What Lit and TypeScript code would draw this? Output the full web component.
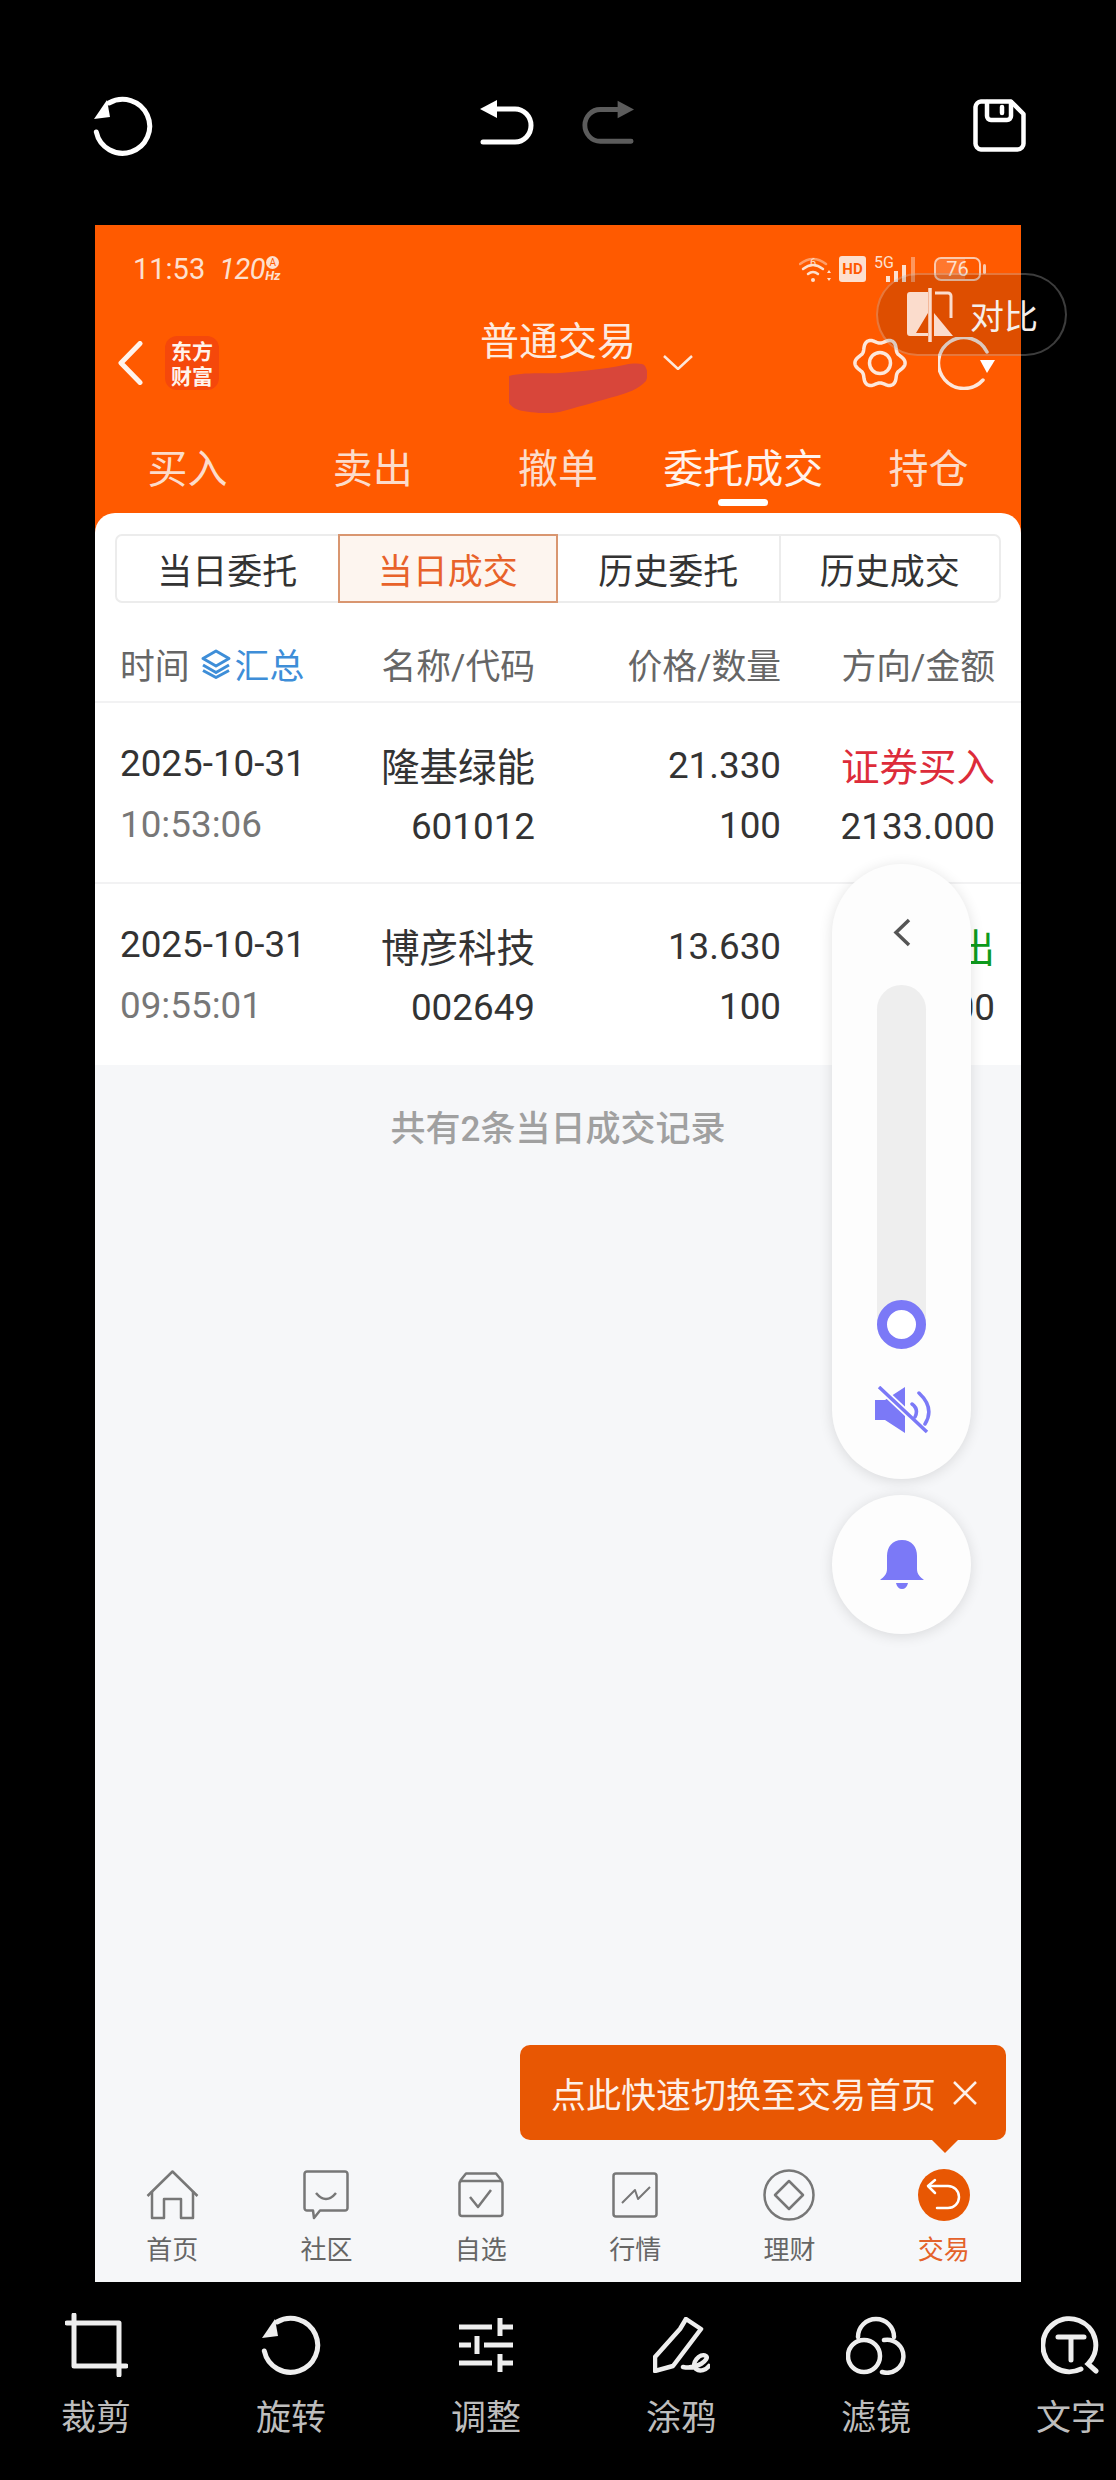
import { LitElement, html, css } from "lit";
import { customElement } from "lit/decorators.js";

const gearPath = (() => {
  const pts: string[] = [];
  for (let i = 0; i <= 120; i++) {
    const t = (i / 120) * Math.PI * 2;
    const r = 22.5 + 2.6 * Math.cos(6 * t);
    pts.push(`${(27 + r * Math.cos(t)).toFixed(2)} ${(26 + r * Math.sin(t)).toFixed(2)}`);
  }
  return "M" + pts.join("L") + "Z";
})();

const rows = [
  { d: "2025-10-31", t: "10:53:06", n: "隆基绿能", c: "601012", p: "21.330", q: "100", dir: "证券买入", cls: "buy", amt: "2133.000" },
  { d: "2025-10-31", t: "09:55:01", n: "博彦科技", c: "002649", p: "13.630", q: "100", dir: "证券卖出", cls: "sell", amt: "1363.000" },
];

@customElement("app-root")
export class AppRoot extends LitElement {
  static styles = css`
    :host {
      display: block;
      position: relative;
      width: 1116px;
      height: 2480px;
      background: #000;
      font-family: Roboto, "Noto Sans CJK SC", sans-serif;
    }
    svg { display: block; flex: none; }
    .top {
      height: 225px;
      box-sizing: border-box;
      padding: 0 90px 0 93px;
      display: flex;
      align-items: flex-start;
      justify-content: space-between;
    }
    .top-l { margin-top: 96px; }
    .top-c { margin: 99px 12px 0 0; display: flex; gap: 46px; }
    .top-r { margin-top: 99px; }
    .screen {
      position: relative;
      margin: 0 95px;
      height: 2057px;
      background: #f6f7f9;
      display: flex;
      flex-direction: column;
    }
    .hdr { background: #ff5a00; color: #fde7db; padding-bottom: 20px; }
    .status {
      height: 86px;
      box-sizing: border-box;
      padding: 2px 35px 0 38px;
      display: flex;
      align-items: center;
      justify-content: space-between;
    }
    .st-l { display: flex; align-items: center; font-size: 29px; color: #fde0cf; }
    .hz { font-style: italic; margin-left: 14px; letter-spacing: -0.5px; }
    .hzs { display: flex; flex-direction: column; align-items: center; }
    .hz-a { width: 13px; height: 13px; border-radius: 50%; background: #fde0cf; color: #ff5a00; font-size: 10px; line-height: 13px; text-align: center; }
    .hz-t { font-size: 13px; line-height: 13px; font-style: italic; font-weight: 700; }
    .st-r { display: flex; align-items: center; }
    .hd { width: 27px; height: 26px; border-radius: 3px; background: #fde0cf; color: #ff5a00; font-size: 15px; font-weight: 700; line-height: 26px; text-align: center; margin-left: 7px; }
    .sig { margin-left: 8px; }
    .batt { margin-left: 8px; display: flex; align-items: center; gap: 2px; }
    .batt-b { width: 47px; height: 24px; box-sizing: border-box; border: 2px solid #fcc9ad; border-radius: 7px; font-size: 20px; line-height: 20px; text-align: center; color: #fde0cf; background: linear-gradient(90deg, rgba(255,255,255,.18) 68%, transparent 68%); }
    .nub { width: 3px; height: 10px; background: #fcc9ad; border-radius: 2px; }
    .bar {
      height: 104px;
      display: grid;
      grid-template-columns: 1fr auto 1fr;
      align-items: center;
    }
    .bar-l { display: flex; align-items: center; padding-left: 23px; gap: 22px; }
    .logo {
      width: 54px; height: 54px; border-radius: 12px; background: #f5480b; color: #fff3ec;
      font-family: "Noto Sans CJK SC", sans-serif; font-weight: 700; font-size: 21px; line-height: 25px; text-align: center;
      display: flex; align-items: center; justify-content: center; white-space: pre-line;
    }
    .title-w { position: relative; align-self: flex-start; padding-top: 9px; display: flex; }
    .title { font-size: 39px; line-height: 44px; color: #fdeadf; }
    .caret { position: absolute; left: 183px; top: 44px; }
    .blob { position: absolute; left: 29px; top: 52px; }
    .bar-r { display: flex; justify-content: flex-end; align-items: center; padding-right: 26px; gap: 31px; }
    .tabs { display: grid; grid-template-columns: repeat(5, 1fr); padding-top: 33px; }
    .tab { display: flex; flex-direction: column; align-items: center; gap: 7px; font-size: 40px; line-height: 44px; color: #fcdccb; }
    .tab.on { color: #fff3ec; }
    .ul { width: 50px; height: 7px; border-radius: 4px; background: transparent; margin-bottom: 7px; }
    .tab.on .ul { background: #fff; }
    .card {
      background: #fff;
      border-radius: 20px 20px 0 0;
      margin-top: -20px;
      padding-top: 21px;
    }
    .seg {
      display: grid;
      grid-template-columns: repeat(4, 1fr);
      margin: 0 20px;
      height: 69px;
      box-sizing: border-box;
      border: 2px solid #ececec;
      border-radius: 7px;
      font-size: 35px;
      color: #333;
    }
    .seg div { display: flex; align-items: center; justify-content: center; border-left: 2px solid #ececec; }
    .seg div:first-child { border-left: 0; }
    .seg div.on { margin: -2px 0; color: #e8622a; background: #fdf5ef; border: 2px solid #d99670; }
    .seg div.on + div { border-left: 0; }
    .head, .row {
      display: grid;
      grid-template-columns: 241px 174px 246px 214px;
      padding: 0 26px 0 25px;
      border-bottom: 2px solid #f2f2f3;
    }
    .head {
      height: 100px;
      box-sizing: border-box;
      padding-top: 24px;
      align-items: center;
      font-size: 34.8px;
      color: #666;
    }
    .r { text-align: right; }
    .hc { display: flex; align-items: center; }
    .sum { margin-left: 10px; color: #3e8ed8; display: flex; align-items: center; gap: 3px; }
    .row { height: 181px; box-sizing: border-box; }
    .row:last-of-type { border-bottom: 0; }
    .cell { display: flex; flex-direction: column; line-height: 44px; font-size: 36.8px; color: #333; }
    .c1 { padding-top: 39px; gap: 17px; }
    .c1 .sub { color: #777; }
    .c2 { padding-top: 43px; gap: 15px; text-align: right; }
    .c3 { padding-top: 41px; gap: 16px; text-align: right; }
    .zh { font-size: 38.5px; }
    .buy { color: #dd2c3a; }
    .sell { color: #0d9a1c; }
    .foot {
      padding-top: 43px;
      text-align: center;
      font-size: 35px;
      line-height: 44px;
      font-weight: 500;
      color: #a0a0a0;
      flex: 1;
    }
    .main { flex: 1; display: flex; flex-direction: column; }
    .nav {
      display: grid;
      grid-template-columns: repeat(6, 1fr);
      padding: 12px 0 17px;
    }
    .ni { display: flex; flex-direction: column; align-items: center; gap: 14px; font-size: 26px; line-height: 30px; color: #666; }
    .ni .ic { height: 52px; display: flex; align-items: center; justify-content: center; }
    .ni.on { color: #e4622b; }
    .vol {
      position: absolute;
      left: 737px;
      top: 639px;
      width: 139px;
      display: flex;
      flex-direction: column;
      align-items: center;
      gap: 16px;
    }
    .pill {
      width: 139px;
      box-sizing: border-box;
      background: #fdfdfd;
      border-radius: 70px;
      box-shadow: 0 2px 14px rgba(0,0,0,.12);
      display: flex;
      flex-direction: column;
      align-items: center;
      padding: 54px 0 44px;
    }
    .track {
      margin: 38px 0 37px;
      width: 49px;
      height: 364px;
      background: #eeeeee;
      border-radius: 25px;
      display: flex;
      align-items: flex-end;
    }
    .knob { width: 49px; height: 49px; box-sizing: border-box; border-radius: 50%; border: 10px solid #7b79f7; background: #fff; }
    .mute { margin-left: 3px; }
    .bell {
      width: 139px; height: 139px; border-radius: 50%;
      background: #fdfdfd;
      box-shadow: 0 2px 14px rgba(0,0,0,.12);
      display: flex; align-items: center; justify-content: center;
    }
    .tip {
      position: absolute;
      left: 425px;
      top: 1820px;
      width: 486px;
      height: 95px;
      box-sizing: border-box;
      padding-left: 31px;
      background: #e85703;
      border-radius: 10px;
      color: #fdf0e8;
      font-size: 35px;
      display: flex;
      align-items: center;
      gap: 16px;
    }
    .tip-c {
      position: absolute;
      left: 412px;
      top: 95px;
      width: 0; height: 0;
      border-left: 13px solid transparent;
      border-right: 13px solid transparent;
      border-top: 13px solid #e85703;
    }
    .tools { display: flex; padding: 33px 0 0 51px; gap: 105px; }
    .tool { flex: none; width: 90px; display: flex; flex-direction: column; align-items: center; gap: 24px; font-size: 35px; line-height: 40px; color: #bdbdbd; }
    .tool .ic { height: 60px; display: flex; align-items: center; }
    .cmp {
      position: absolute;
      left: 876px;
      top: 273px;
      width: 191px;
      height: 83px;
      box-sizing: border-box;
      border: 2px solid rgba(255,255,255,.24);
      border-radius: 42px;
      background: rgba(0,0,0,.13);
      display: flex;
      align-items: center;
      padding-left: 29px;
      gap: 17px;
      color: #f5eeea;
      font-size: 34px;
    }
  `;

  render() {
    const wh = "#fff";
    const nv = "#777";
    return html`
      <div class="top">
        <div class="top-l">
          <svg width="60" height="60" viewBox="0 0 60 60" fill="none"><path d="M3.3 36A27 27 0 1 0 16 7" stroke="${wh}" stroke-width="5" stroke-linecap="round"/><path d="M14 4L1 23L17 21Z" fill="${wh}"/></svg>
        </div>
        <div class="top-c">
          <svg width="55" height="46" viewBox="0 0 55 46" fill="none"><path d="M3 43H35A16 16.5 0 0 0 35 10H12" stroke="${wh}" stroke-width="5" stroke-linecap="round"/><path d="M0 10L17 1V19Z" fill="${wh}"/></svg>
          <svg width="53" height="46" viewBox="0 0 55 46" fill="none"><path d="M52 43H20A16 16.5 0 0 1 20 10H43" stroke="#5c5c5c" stroke-width="5" stroke-linecap="round"/><path d="M55 10L38 1V19Z" fill="#5c5c5c"/></svg>
        </div>
        <div class="top-r">
          <svg width="53" height="53" viewBox="0 0 53 53" fill="none" stroke="${wh}" stroke-width="4.5" stroke-linejoin="round" stroke-linecap="round"><path d="M8 2.5H38L50.5 15V44A6 6 0 0 1 44.5 50.5H8A6 6 0 0 1 2.5 44V8A6 6 0 0 1 8 2.5Z"/><path d="M14 3V17A4 4 0 0 0 18 21H34A4 4 0 0 0 38 17V3"/><path d="M29 8V14"/></svg>
        </div>
      </div>

      <div class="screen">
        <div class="hdr">
          <div class="status">
            <div class="st-l"><span>11:53</span><span class="hz">120</span>
              <span class="hzs"><span class="hz-a">A</span><span class="hz-t">Hz</span></span></div>
            <div class="st-r">
              <svg width="33" height="28" viewBox="0 0 33 28" fill="none" stroke="#fde0cf" stroke-width="2.5" stroke-linecap="round"><path d="M1 9Q14 -1 27 9" opacity=".5"/><path d="M4 14Q14 6 24 14"/><path d="M9 19Q14 15 19 19"/><circle cx="14" cy="25" r="2" fill="#fde0cf" stroke="none"/><path d="M30 15L32 18H28Z M30 26L32 23H28Z" fill="#fde0cf" stroke="none"/><text x="14" y="11" font-size="11" fill="#fde0cf" stroke="none" text-anchor="middle" font-family="Roboto">6</text></svg>
              <div class="hd">HD</div>
              <svg class="sig" width="52" height="28" viewBox="0 0 52 28" fill="#fde0cf"><text x="0" y="13" font-size="16" font-family="Roboto">5G</text><rect x="12" y="21" width="4" height="6"/><rect x="20" y="16" width="4" height="11"/><rect x="28" y="10" width="4" height="17"/><rect x="37" y="2" width="4" height="25" opacity=".45"/></svg>
              <div class="batt"><div class="batt-b">76</div><div class="nub"></div></div>
            </div>
          </div>
          <div class="bar">
            <div class="bar-l">
              <svg width="25" height="44" viewBox="0 0 25 44" fill="none"><path d="M22 2.5L3 22L22 41.5" stroke="#fff3ec" stroke-width="5" stroke-linecap="round" stroke-linejoin="round"/></svg>
              <div class="logo">东方
财富</div>
            </div>
            <div class="title-w">
              <div class="title">普通交易</div>
              <svg class="caret" width="30" height="15" viewBox="0 0 30 15" fill="none"><path d="M1 1L15 14L29 1" stroke="#fde7db" stroke-width="2.5"/></svg>
              <svg class="blob" width="138" height="50" viewBox="0 0 138 50"><path d="M0 13C15 9 35 11 51 10C75 8 95 6 115 2C125 0 134 0 136 3C139 8 139 13 137 18C130 26 118 30 108 33C90 38 72 43 58 47C48 50 38 51 30 50C20 49 10 48 5 45C1 42 -1 40 0 37C-1 30 -1 20 0 13Z" fill="#d8463a"/></svg>
            </div>
            <div class="bar-r">
              <svg width="54" height="52" viewBox="0 0 54 52" fill="none" stroke="#fde7db" stroke-width="3.5"><path d="${gearPath}" stroke-linejoin="round"/><circle cx="27" cy="26" r="10.5"/></svg>
              <svg width="57" height="53" viewBox="0 0 57 53" fill="none"><path d="M49 15A25.5 25.5 0 1 0 45 43" stroke="#fde7db" stroke-width="3.5" stroke-linecap="round"/><path d="M42 23H57L49 36Z" fill="#fff"/></svg>
            </div>
          </div>
          <div class="tabs">
            ${["买入", "卖出", "撤单", "委托成交", "持仓"].map(
              (t, i) => html`<div class="tab ${i === 3 ? "on" : ""}"><span>${t}</span><div class="ul"></div></div>`
            )}
          </div>
        </div>

        <div class="card">
          <div class="seg">
            <div>当日委托</div><div class="on">当日成交</div><div>历史委托</div><div>历史成交</div>
          </div>
          <div class="head">
            <div class="hc">时间<span class="sum">
              <svg width="32" height="30" viewBox="0 0 32 30" fill="none" stroke="#3e8ed8" stroke-width="3" stroke-linejoin="round"><path d="M16 2L29 9.5L16 17L3 9.5Z"/><path d="M3 16L16 23.5L29 16"/><path d="M3 21.5L16 28.5L29 21.5"/></svg>汇总</span></div>
            <div class="r">名称/代码</div>
            <div class="r">价格/数量</div>
            <div class="r">方向/金额</div>
          </div>
          ${rows.map(
            (r) => html`<div class="row">
              <div class="cell c1"><span>${r.d}</span><span class="sub">${r.t}</span></div>
              <div class="cell c2"><span class="zh">${r.n}</span><span>${r.c}</span></div>
              <div class="cell c3"><span>${r.p}</span><span>${r.q}</span></div>
              <div class="cell c2"><span class="zh ${r.cls}">${r.dir}</span><span>${r.amt}</span></div>
            </div>`
          )}
        </div>

        <div class="main"><div class="foot">共有2条当日成交记录</div></div>

        <div class="nav">
          <div class="ni"><div class="ic"><svg width="53" height="50" viewBox="0 0 53 50" fill="none" stroke="${nv}" stroke-width="2.5" stroke-linejoin="round"><path d="M1.5 26L26.5 1.5L51.5 26"/><path d="M6 21V48H18V29H35V48H47V21"/></svg></div>首页</div>
          <div class="ni"><div class="ic"><svg width="46" height="50" viewBox="0 0 46 50" fill="none" stroke="${nv}" stroke-width="2.5" stroke-linejoin="round"><path d="M4 1.5H42A2.5 2.5 0 0 1 44.5 4V38A2.5 2.5 0 0 1 42 40.5H17L11 48L10 40.5H4A2.5 2.5 0 0 1 1.5 38V4A2.5 2.5 0 0 1 4 1.5Z"/><path d="M13 23Q23 35 33 23"/></svg></div>社区</div>
          <div class="ni"><div class="ic"><svg width="46" height="46" viewBox="0 0 46 46" fill="none" stroke="${nv}" stroke-width="2.5" stroke-linejoin="round"><rect x="1.5" y="9" width="43" height="35" rx="2.5"/><path d="M2 9L8 1.5H38L44 9"/><path d="M12 25L20 35L33 18"/></svg></div>自选</div>
          <div class="ni"><div class="ic"><svg width="46" height="46" viewBox="0 0 46 46" fill="none" stroke="${nv}" stroke-width="2.5" stroke-linejoin="round"><rect x="1.5" y="1.5" width="43" height="43" rx="2.5"/><path d="M10 31L23 18L26 27L38 15" stroke-width="2"/></svg></div>行情</div>
          <div class="ni"><div class="ic"><svg width="52" height="52" viewBox="0 0 52 52" fill="none" stroke="${nv}" stroke-width="2.5" stroke-linejoin="round"><circle cx="26" cy="26" r="24.5"/><path d="M12 26L26 12L40 26L26 40Z"/></svg></div>理财</div>
          <div class="ni on"><div class="ic"><svg width="52" height="52" viewBox="0 0 52 52" fill="none"><circle cx="26" cy="26" r="26" fill="#e85703"/><path d="M11 17H30A11 11 0 0 1 30 39H19" stroke="#fff" stroke-width="2.5" stroke-linecap="round"/><path d="M17 11L10 17L17 24" stroke="#fff" stroke-width="2.5" stroke-linecap="round" stroke-linejoin="round"/></svg></div>交易</div>
        </div>

        <div class="vol">
          <div class="pill">
            <svg width="18" height="29" viewBox="0 0 18 29" fill="none"><path d="M16 2L3 14.5L16 27" stroke="#555" stroke-width="3.5"/></svg>
            <div class="track"><div class="knob"></div></div>
            <svg class="mute" width="57" height="49" viewBox="0 0 57 49"><path d="M0 14H10L30 1V47L10 34H0Z" fill="#7b79f7"/><path d="M4 1L52 46" stroke="#fff" stroke-width="7"/><path d="M4 1L52 46" stroke="#7b79f7" stroke-width="3.5"/><path d="M37 18Q44 23 40 31M44 7Q60 22 50 38" fill="none" stroke="#7b79f7" stroke-width="3.5" stroke-linecap="round"/></svg>
          </div>
          <div class="bell">
            <svg width="44" height="49" viewBox="0 0 44 49"><path d="M22 0C12 0 7 7 7 16V29C7 34 4 37 0 40H44C40 37 37 34 37 29V16C37 7 32 0 22 0Z" fill="#7b79f7"/><path d="M16 43H28C27 47 25 49 22 49C19 49 17 47 16 43Z" fill="#7b79f7"/></svg>
          </div>
        </div>

        <div class="tip">
          <span>点此快速切换至交易首页</span>
          <svg width="26" height="24" viewBox="0 0 26 24" fill="none"><path d="M2 1L24 23M24 1L2 23" stroke="#fdf0e8" stroke-width="2.5"/></svg>
          <div class="tip-c"></div>
        </div>
      </div>

      <div class="tools">
        <div class="tool"><div class="ic"><svg width="63" height="64" viewBox="0 0 63 64" fill="none" stroke="#eee" stroke-width="5" stroke-linejoin="round" stroke-linecap="round"><path d="M9 2V53H61"/><path d="M2 10H54V62"/></svg></div>裁剪</div>
        <div class="tool"><div class="ic"><svg width="60" height="60" viewBox="0 0 60 60" fill="none"><path d="M3.3 36A27 27 0 1 0 16 7" stroke="#eee" stroke-width="5" stroke-linecap="round"/><path d="M14 4L1 23L17 21Z" fill="#eee"/></svg></div>旋转</div>
        <div class="tool"><div class="ic"><svg width="54" height="54" viewBox="0 0 54 54" fill="none" stroke="#eee" stroke-width="5"><path d="M0 9H33M41 9H54M41 0V18M0 27H12M25 27H54M18 18V36M0 45H33M41 45H54M41 36V54" /></svg></div>调整</div>
        <div class="tool"><div class="ic"><svg width="57" height="56" viewBox="0 0 57 56" fill="none" stroke="#eee" stroke-width="4.5" stroke-linejoin="round" stroke-linecap="round"><path d="M33 2L48 12L20 49L2 54V40L27 12Z"/><path d="M30 50C44 53 57 42 53 39C47 35 37 47 43 52C47 55 53 53 56 49"/></svg></div>涂鸦</div>
        <div class="tool"><div class="ic"><svg width="60" height="60" viewBox="0 0 60 60" fill="none" stroke="#eee" stroke-width="4.5" stroke-linecap="round"><path d="M12 22A18 18 0 1 1 48 22"/><circle cx="18" cy="41" r="16"/><path d="M38 25A16.5 16.5 0 1 1 36 57"/></svg></div>滤镜</div>
        <div class="tool"><div class="ic"><svg width="60" height="60" viewBox="0 0 60 60" fill="none" stroke="#eee" stroke-width="5" stroke-linecap="round"><path d="M40 54A26.5 26.5 0 1 1 47 49L55 56"/><path d="M17 22H43M30 22V45" stroke-width="5"/></svg></div>文字</div>
      </div>

      <div class="cmp">
        <svg width="46" height="54" viewBox="0 0 46 54" fill="none"><path d="M3 4H21V25L9 45H21V48H3A3 3 0 0 1 0 45V7A3 3 0 0 1 3 4Z" fill="#fbdccc"/><path d="M23 0V54" stroke="#fbdccc" stroke-width="3.5" stroke-linecap="round"/><path d="M28 5H41A3 3 0 0 1 44 8V30" stroke="#fbdccc" stroke-width="3"/><path d="M27 25L46 48H27Z" fill="#fbdccc"/></svg>
        <span>对比</span>
      </div>
    `;
  }
}
